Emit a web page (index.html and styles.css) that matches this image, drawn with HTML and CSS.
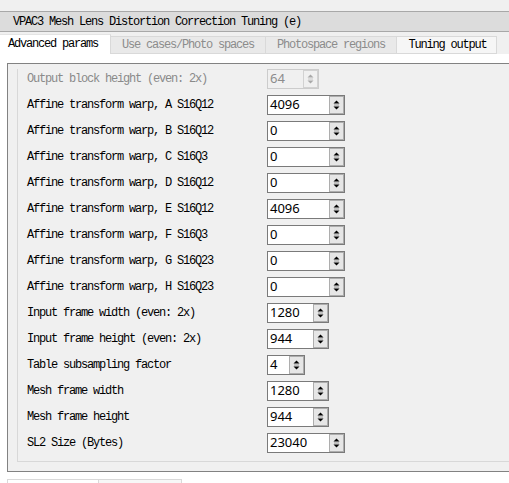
FILE: index.html
```html
<!DOCTYPE html>
<html>
<head>
<meta charset="utf-8">
<link rel="stylesheet" href="styles.css">
</head>
<body>
<div class="page">
  <div class="topgap"></div>
  <div class="titlebar">VPAC3 Mesh Lens Distortion Correction Tuning (e)</div>
  <div class="tabbar">
    <div class="tab active t1">Advanced params</div>
    <div class="tab off t2">Use cases/Photo spaces</div>
    <div class="tab off t3">Photospace regions</div>
    <div class="tab t4">Tuning output</div>
  </div>
  <div class="pane">
    <div class="scroll">
      <div class="form">
        <div class="lbl dis">Output block height (even: 2x)</div>
        <div class="spin dis w52"><span class="val">64</span><svg class="btn" width="15" height="18" viewBox="0 0 15 18"><rect x="0.5" y="0.5" width="14" height="17" fill="#f0f0f0" stroke="#d2d2d2"/><path d="M4.5 7.5h6l-3-3z" fill="#a8a8a8"/><path d="M5 9h5" stroke="#c8c8c8"/><path d="M4.5 10.5h6l-3 3z" fill="#a8a8a8"/></svg></div>

        <div class="lbl">Affine transform warp, A S16Q12</div>
        <div class="spin w78"><span class="val">4096</span><svg class="btn" width="15" height="18" viewBox="0 0 15 18"><rect x="0.5" y="0.5" width="14" height="17" fill="#e6e6e6" stroke="#adadad"/><path d="M4.5 7.5h6l-3-3z" fill="#000"/><path d="M5 9h5" stroke="#9a9a9a"/><path d="M4.5 10.5h6l-3 3z" fill="#000"/></svg></div>

        <div class="lbl">Affine transform warp, B S16Q12</div>
        <div class="spin w78"><span class="val">0</span><svg class="btn" width="15" height="18" viewBox="0 0 15 18"><rect x="0.5" y="0.5" width="14" height="17" fill="#e6e6e6" stroke="#adadad"/><path d="M4.5 7.5h6l-3-3z" fill="#000"/><path d="M5 9h5" stroke="#9a9a9a"/><path d="M4.5 10.5h6l-3 3z" fill="#000"/></svg></div>

        <div class="lbl">Affine transform warp, C S16Q3</div>
        <div class="spin w78"><span class="val">0</span><svg class="btn" width="15" height="18" viewBox="0 0 15 18"><rect x="0.5" y="0.5" width="14" height="17" fill="#e6e6e6" stroke="#adadad"/><path d="M4.5 7.5h6l-3-3z" fill="#000"/><path d="M5 9h5" stroke="#9a9a9a"/><path d="M4.5 10.5h6l-3 3z" fill="#000"/></svg></div>

        <div class="lbl">Affine transform warp, D S16Q12</div>
        <div class="spin w78"><span class="val">0</span><svg class="btn" width="15" height="18" viewBox="0 0 15 18"><rect x="0.5" y="0.5" width="14" height="17" fill="#e6e6e6" stroke="#adadad"/><path d="M4.5 7.5h6l-3-3z" fill="#000"/><path d="M5 9h5" stroke="#9a9a9a"/><path d="M4.5 10.5h6l-3 3z" fill="#000"/></svg></div>

        <div class="lbl">Affine transform warp, E S16Q12</div>
        <div class="spin w78"><span class="val">4096</span><svg class="btn" width="15" height="18" viewBox="0 0 15 18"><rect x="0.5" y="0.5" width="14" height="17" fill="#e6e6e6" stroke="#adadad"/><path d="M4.5 7.5h6l-3-3z" fill="#000"/><path d="M5 9h5" stroke="#9a9a9a"/><path d="M4.5 10.5h6l-3 3z" fill="#000"/></svg></div>

        <div class="lbl">Affine transform warp, F S16Q3</div>
        <div class="spin w78"><span class="val">0</span><svg class="btn" width="15" height="18" viewBox="0 0 15 18"><rect x="0.5" y="0.5" width="14" height="17" fill="#e6e6e6" stroke="#adadad"/><path d="M4.5 7.5h6l-3-3z" fill="#000"/><path d="M5 9h5" stroke="#9a9a9a"/><path d="M4.5 10.5h6l-3 3z" fill="#000"/></svg></div>

        <div class="lbl">Affine transform warp, G S16Q23</div>
        <div class="spin w78"><span class="val">0</span><svg class="btn" width="15" height="18" viewBox="0 0 15 18"><rect x="0.5" y="0.5" width="14" height="17" fill="#e6e6e6" stroke="#adadad"/><path d="M4.5 7.5h6l-3-3z" fill="#000"/><path d="M5 9h5" stroke="#9a9a9a"/><path d="M4.5 10.5h6l-3 3z" fill="#000"/></svg></div>

        <div class="lbl">Affine transform warp, H S16Q23</div>
        <div class="spin w78"><span class="val">0</span><svg class="btn" width="15" height="18" viewBox="0 0 15 18"><rect x="0.5" y="0.5" width="14" height="17" fill="#e6e6e6" stroke="#adadad"/><path d="M4.5 7.5h6l-3-3z" fill="#000"/><path d="M5 9h5" stroke="#9a9a9a"/><path d="M4.5 10.5h6l-3 3z" fill="#000"/></svg></div>

        <div class="lbl">Input frame width (even: 2x)</div>
        <div class="spin w62"><span class="val">1280</span><svg class="btn" width="15" height="18" viewBox="0 0 15 18"><rect x="0.5" y="0.5" width="14" height="17" fill="#e6e6e6" stroke="#adadad"/><path d="M4.5 7.5h6l-3-3z" fill="#000"/><path d="M5 9h5" stroke="#9a9a9a"/><path d="M4.5 10.5h6l-3 3z" fill="#000"/></svg></div>

        <div class="lbl">Input frame height (even: 2x)</div>
        <div class="spin w62"><span class="val">944</span><svg class="btn" width="15" height="18" viewBox="0 0 15 18"><rect x="0.5" y="0.5" width="14" height="17" fill="#e6e6e6" stroke="#adadad"/><path d="M4.5 7.5h6l-3-3z" fill="#000"/><path d="M5 9h5" stroke="#9a9a9a"/><path d="M4.5 10.5h6l-3 3z" fill="#000"/></svg></div>

        <div class="lbl">Table subsampling factor</div>
        <div class="spin w38"><span class="val">4</span><svg class="btn" width="15" height="18" viewBox="0 0 15 18"><rect x="0.5" y="0.5" width="14" height="17" fill="#e6e6e6" stroke="#adadad"/><path d="M4.5 7.5h6l-3-3z" fill="#000"/><path d="M5 9h5" stroke="#9a9a9a"/><path d="M4.5 10.5h6l-3 3z" fill="#000"/></svg></div>

        <div class="lbl">Mesh frame width</div>
        <div class="spin w62"><span class="val">1280</span><svg class="btn" width="15" height="18" viewBox="0 0 15 18"><rect x="0.5" y="0.5" width="14" height="17" fill="#e6e6e6" stroke="#adadad"/><path d="M4.5 7.5h6l-3-3z" fill="#000"/><path d="M5 9h5" stroke="#9a9a9a"/><path d="M4.5 10.5h6l-3 3z" fill="#000"/></svg></div>

        <div class="lbl">Mesh frame height</div>
        <div class="spin w62"><span class="val">944</span><svg class="btn" width="15" height="18" viewBox="0 0 15 18"><rect x="0.5" y="0.5" width="14" height="17" fill="#e6e6e6" stroke="#adadad"/><path d="M4.5 7.5h6l-3-3z" fill="#000"/><path d="M5 9h5" stroke="#9a9a9a"/><path d="M4.5 10.5h6l-3 3z" fill="#000"/></svg></div>

        <div class="lbl">SL2 Size (Bytes)</div>
        <div class="spin w78"><span class="val">23040</span><svg class="btn" width="15" height="18" viewBox="0 0 15 18"><rect x="0.5" y="0.5" width="14" height="17" fill="#e6e6e6" stroke="#adadad"/><path d="M4.5 7.5h6l-3-3z" fill="#000"/><path d="M5 9h5" stroke="#9a9a9a"/><path d="M4.5 10.5h6l-3 3z" fill="#000"/></svg></div>
      </div>
    </div>
    <div class="subtabs">
      <div class="subtab s1"></div>
      <div class="subtab s2"></div>
    </div>
  </div>
</div>
</body>
</html>
```

FILE: styles.css
```css
html, body {
  margin: 0;
  padding: 0;
  background: #f0f0f0;
}
.page {
  width: 509px;
  height: 483px;
  overflow: hidden;
  font-family: "Liberation Mono", "DejaVu Sans Mono", monospace;
  font-size: 12px;
  letter-spacing: -1.2px;
  color: #000;
}
.topgap {
  height: 11px;
}
.titlebar {
  height: 19px;
  line-height: 20px;
  border-top: 1px solid #a8a8a8;
  border-bottom: 1px solid #a8a8a8;
  background: #dcdcdc;
  padding-left: 13px;
  white-space: nowrap;
}
.tabbar {
  margin-top: 2px;
  height: 20px;
  display: flex;
  align-items: flex-end;
}
.tab {
  box-sizing: border-box;
  white-space: nowrap;
  line-height: 17px;
  text-align: center;
}
.t1 {
  width: 111px;
  height: 20px;
  background: #fff;
  border-right: 1px solid #d9d9d9;
  border-top: 1px solid #e4e4e4;
  text-align: left;
  padding-left: 8px;
  line-height: 19px;
}
.off {
  height: 18px;
  background: #e9e9e9;
  color: #8c8c8c;
  border: 1px solid #d9d9d9;
  border-left: none;
}
.t2 { width: 155px; }
.t3 { width: 131px; }
.t4 {
  width: 100px;
  height: 18px;
  background: #f6f6f6;
  border: 1px solid #d9d9d9;
  border-left: none;
  padding-left: 2px;
}
.pane {
  background: #fff;
  padding-top: 9px;
  height: 420px;
}
.scroll {
  margin-left: 7px;
  width: 600px;
  box-sizing: border-box;
  border: 1px solid #828282;
  border-right: none;
  background: #f0f0f0;
  padding: 5px 0 9px 9px;
}
.form {
  border-left: 1px solid #d8d8d8;
  border-bottom: 1px solid #d8d8d8;
  padding: 0 0 8px 9px;
  display: grid;
  grid-template-columns: 240px auto;
  row-gap: 6px;
  align-items: center;
}
.lbl {
  white-space: nowrap;
  line-height: 20px;
}
.lbl.dis {
  color: #8a8a8a;
}
.spin {
  justify-self: start;
  box-sizing: border-box;
  height: 20px;
  border: 1px solid #7a7a7a;
  background: #fff;
  display: flex;
  justify-content: space-between;
  font-family: "Noto Sans", "Open Sans", sans-serif;
  font-size: 13px;
  letter-spacing: 0;
  line-height: 17px;
}
.spin.dis {
  border-color: #cccccc;
  background: #f0f0f0;
  color: #8c8c8c;
}
.val {
  padding-left: 2px;
}
.btn {
  display: block;
  flex: none;
}
.w52 { width: 52px; }
.w78 { width: 78px; }
.w62 { width: 62px; }
.w38 { width: 38px; }
.subtabs {
  margin-top: 7px;
  display: flex;
}
.subtab {
  height: 12px;
  box-sizing: border-box;
  border: 1px solid #d9d9d9;
  border-bottom: none;
  background: #fff;
}
.s1 { width: 92px; margin-left: 7px; }
.s2 { width: 83px; border-left: none; background: #f7f7f7; }
```
